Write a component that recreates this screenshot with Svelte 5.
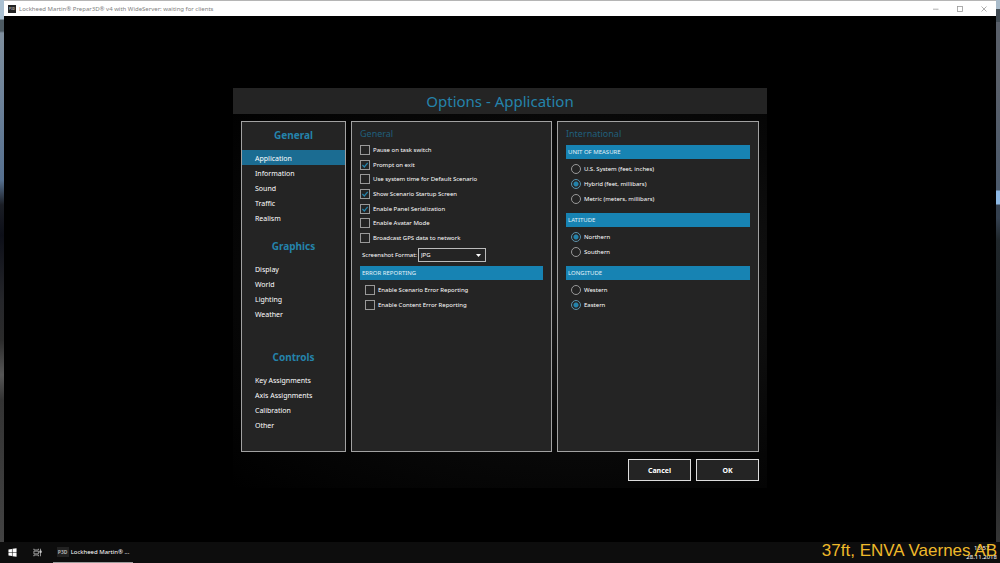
<script lang="ts">
  const groups = [
    { title: 'General', items: ['Application', 'Information', 'Sound', 'Traffic', 'Realism'] },
    { title: 'Graphics', items: ['Display', 'World', 'Lighting', 'Weather'] },
    { title: 'Controls', items: ['Key Assignments', 'Axis Assignments', 'Calibration', 'Other'] },
  ];
  let current = $state('Application');

  let general = $state([
    { label: 'Pause on task switch', on: false },
    { label: 'Prompt on exit', on: true },
    { label: 'Use system time for Default Scenario', on: false },
    { label: 'Show Scenario Startup Screen', on: true },
    { label: 'Enable Panel Serialization', on: true },
    { label: 'Enable Avatar Mode', on: false },
    { label: 'Broadcast GPS data to network', on: false },
  ]);
  let reporting = $state([
    { label: 'Enable Scenario Error Reporting', on: false },
    { label: 'Enable Content Error Reporting', on: false },
  ]);
  let regions = $state([
    {
      name: 'UNIT OF MEASURE',
      options: ['U.S. System (feet, inches)', 'Hybrid (feet, millibars)', 'Metric (meters, millibars)'],
      value: 'Hybrid (feet, millibars)',
    },
    { name: 'LATITUDE', options: ['Northern', 'Southern'], value: 'Northern' },
    { name: 'LONGITUDE', options: ['Western', 'Eastern'], value: 'Eastern' },
  ]);
  let format = $state('JPG');
</script>

<div class="desktop">
  <div class="window">
    <header class="titlebar">
      <span class="appicon">P3D</span>
      <span class="caption">Lockheed Martin® Prepar3D® v4 with WideServer: waiting for clients</span>
      <button class="winbtn" aria-label="Minimize">
        <svg viewBox="0 0 8 8"><path d="M1 4.2h5.5" /></svg>
      </button>
      <button class="winbtn" aria-label="Maximize">
        <svg viewBox="0 0 8 8"><rect x="1.5" y="1.5" width="5" height="5" /></svg>
      </button>
      <button class="winbtn" aria-label="Close">
        <svg viewBox="0 0 8 8"><path d="M1.5 1.5l5 5M6.5 1.5l-5 5" /></svg>
      </button>
    </header>

    <main>
      <section class="dialog">
        <h1>Options - Application</h1>
        <div class="panels">
          <nav class="panel">
            {#each groups as group}
              <div class="group">
                <h2>{group.title}</h2>
                {#each group.items as item}
                  <button class="item" class:active={item === current} onclick={() => (current = item)}>{item}</button>
                {/each}
              </div>
            {/each}
          </nav>

          <section class="panel body">
            <h3>General</h3>
            <div class="options seven">
              {#each general as option}
                <label><input type="checkbox" bind:checked={option.on} />{option.label}</label>
              {/each}
            </div>
            <div class="format">
              <label for="format">Screenshot Format:</label>
              <select id="format" bind:value={format}>
                <option>JPG</option>
                <option>PNG</option>
                <option>BMP</option>
              </select>
            </div>
            <h4>ERROR REPORTING</h4>
            <div class="options nested two">
              {#each reporting as option}
                <label><input type="checkbox" bind:checked={option.on} />{option.label}</label>
              {/each}
            </div>
          </section>

          <section class="panel body">
            <h3>International</h3>
            {#each regions as region}
              <h4>{region.name}</h4>
              <div class="options nested" class:three={region.options.length === 3} class:two={region.options.length === 2}>
                {#each region.options as option}
                  <label><input type="radio" name={region.name} value={option} bind:group={region.value} />{option}</label>
                {/each}
              </div>
            {/each}
          </section>
        </div>
        <div class="actions">
          <button>Cancel</button>
          <button>OK</button>
        </div>
      </section>
    </main>
  </div>

  <footer class="taskbar">
    <button class="start" aria-label="Start">
      <svg viewBox="0 0 10 10"><path d="M0.5 1.6L4.4 1v3.7H0.5zM5 0.9L9.5 0.3v4.4H5zM0.5 5.3h3.9V9L0.5 8.4zM5 5.3h4.5v4.4L5 9.1z" /></svg>
    </button>
    <button class="view" aria-label="Task view">
      <svg viewBox="0 0 10 10"><path d="M1 0.8v1.4h5V0.8M1 9.2V7.8h5v1.4M1 3.5h5v3H1zM8.3 0.8v8.4" /><path d="M7.6 3.2h1.6v1.8H7.6z" class="solid" /></svg>
    </button>
    <button class="task"><span class="appicon">P3D</span>Lockheed Martin® ...</button>
    <div class="clock"><span>15:57</span><span>28.11.2018</span></div>
  </footer>
  <div class="overlay">37ft, ENVA Vaernes AB</div>
</div>

<style>
  :global(body) {
    margin: 0;
    background: #000;
  }
  .desktop {
    position: relative;
    box-sizing: border-box;
    min-height: 100vh;
    display: flex;
    flex-direction: column;
    font-family: 'Noto Sans', 'Open Sans', sans-serif;
    font-size: 6px;
    color: #fff;
    background:
      linear-gradient(#a9c0d2 0 19px, #4d5a62 20px 31px, #7f8f9e 33px, #6d8299 100px, #56708f 180px, #1a1d24 205px, #0d0f18 235px, #25262a 300px, #2b2b2b 340px, #565656 375px, #333 400px, #454545) left / 4px 100% no-repeat,
      linear-gradient(#a9bccb 0 9px, #414b54 9px 22px, #595f69 22px 80px, #4b596b 190px, #8db8e4 191px 204px, #34404f 205px 218px, #20272b 240px, #17191b 400px, #393939);
  }
  button {
    font: inherit;
    color: inherit;
    background: none;
    border: 0;
    padding: 0;
  }
  h1, h2, h3, h4 {
    margin: 0;
    font-weight: 400;
  }
  .window {
    flex: 1;
    display: flex;
    flex-direction: column;
    margin: 0 4px;
    background: #000;
  }
  .titlebar {
    display: flex;
    align-items: center;
    height: 16px;
    box-sizing: border-box;
    padding: 0 0 0 4px;
    border-top: 1px solid #b5b5b5;
    background: #fff;
    color: #808080;
  }
  .appicon {
    width: 8px;
    height: 8px;
    line-height: 8px;
    font-size: 3px;
    font-weight: 700;
    text-align: center;
    color: #aaa;
    background: #222;
  }
  .caption {
    flex: 1;
    margin-left: 3px;
  }
  .winbtn {
    width: 24px;
    height: 15px;
    display: grid;
    place-items: center;
  }
  .winbtn svg {
    width: 8px;
    height: 8px;
    fill: none;
    stroke: #999;
    stroke-width: 0.8;
  }
  main {
    flex: 1;
    display: flex;
    justify-content: center;
    align-items: flex-start;
    padding-top: 72px;
  }
  .dialog {
    width: 100%;
    max-width: 534px;
    background: radial-gradient(ellipse at 65% 50%, #1a1a1a, #080808 60%, #000);
  }
  h1 {
    line-height: 26px;
    text-align: center;
    font-size: 15px;
    color: #2483ab;
    background: #242424;
  }
  .panels {
    display: grid;
    grid-template-columns: 105fr 201fr 202fr;
    gap: 5px;
    margin: 7px 8px 0;
  }
  .panel {
    box-sizing: border-box;
    min-height: 331px;
    border: 1px solid #a2a2a2;
    background: #242424;
  }
  .group {
    box-sizing: border-box;
    min-height: 111px;
    padding-top: 4px;
  }
  .group:last-child {
    min-height: 104px;
  }
  h2 {
    margin-bottom: 6px;
    line-height: 18px;
    text-align: center;
    font-size: 10px;
    font-weight: 700;
    color: #2483ab;
  }
  .item {
    display: block;
    width: 100%;
    padding: 2px 0 0 13px;
    line-height: 13px;
    font-size: 7px;
    text-align: left;
  }
  .item.active {
    background: #1b6c92;
  }
  .body {
    padding: 4px 8px;
  }
  h3 {
    margin-bottom: 3px;
    line-height: 16px;
    font-size: 9px;
    color: #205f7b;
  }
  h4 {
    padding-left: 2px;
    line-height: 14px;
    color: #e2f1f8;
    background: #1783b3;
  }
  .options {
    display: grid;
    grid-auto-rows: 1fr;
  }
  .options label {
    display: flex;
    align-items: center;
    gap: 3px;
    white-space: nowrap;
  }
  .nested {
    padding: 3px 0 0 5px;
    margin-bottom: 7px;
  }
  .seven {
    height: 102px;
    margin-top: -2px;
  }
  .three {
    height: 44px;
  }
  .two {
    height: 29px;
  }
  input {
    appearance: none;
    flex: none;
    box-sizing: border-box;
    width: 10px;
    height: 10px;
    margin: 0;
    border: 1px solid #999;
    background: #242424 center / 8px 8px no-repeat;
  }
  input[type='radio'] {
    border-radius: 50%;
  }
  input[type='checkbox']:checked {
    background-image: url("data:image/svg+xml,%3Csvg xmlns='http://www.w3.org/2000/svg' viewBox='0 0 8 8'%3E%3Cpath d='M1.4 4l1.9 2L6.7 1.8' fill='none' stroke='%232483ab' stroke-width='1.2'/%3E%3C/svg%3E");
  }
  input[type='radio']:checked {
    border-color: #5b92ab;
    background-image: radial-gradient(circle, #2483ab 2px, transparent 3px);
  }
  .format {
    display: flex;
    align-items: center;
    gap: 1px;
    height: 14px;
    margin: 3px 0 4px;
    padding-left: 2px;
  }
  select {
    appearance: none;
    width: 68px;
    height: 14px;
    padding: 0 2px;
    border: 1px solid #bbb;
    border-radius: 0;
    font: inherit;
    color: inherit;
    background: #242424 url("data:image/svg+xml,%3Csvg xmlns='http://www.w3.org/2000/svg' viewBox='0 0 5 3'%3E%3Cpath d='M0 0h5L2.5 3z' fill='%23fff'/%3E%3C/svg%3E") right 4px center / 5px 3px no-repeat;
  }
  .actions {
    display: flex;
    justify-content: flex-end;
    gap: 5px;
    padding: 7px 8px 7px;
  }
  .actions button {
    box-sizing: border-box;
    width: 63px;
    height: 22px;
    border: 1px solid #ddd;
    font-size: 7px;
    font-weight: 700;
    background: #242424;
  }
  .taskbar {
    display: flex;
    height: 21px;
    background: #0d0d0d;
  }
  .taskbar button {
    display: flex;
    align-items: center;
    justify-content: center;
  }
  .taskbar svg {
    width: 9px;
    height: 9px;
    fill: #fff;
  }
  .taskbar .start,
  .taskbar .view {
    width: 25px;
  }
  .taskbar .view svg {
    fill: none;
    stroke: #ccc;
    stroke-width: 0.8;
  }
  .taskbar .view .solid {
    fill: #ccc;
  }
  .taskbar .task {
    box-sizing: border-box;
    width: 80px;
    margin-left: 3px;
    gap: 2px;
    border-bottom: 1px solid #9a9a9a;
    white-space: nowrap;
  }
  .task .appicon {
    width: 12px;
    height: 10px;
    line-height: 10px;
    font-size: 5px;
  }
  .clock {
    display: flex;
    flex-direction: column;
    align-items: center;
    margin-left: auto;
    padding: 2px 3px 0 0;
    line-height: 9px;
  }
  .overlay {
    position: absolute;
    right: 3px;
    bottom: 2px;
    line-height: 20px;
    font-family: 'Liberation Sans', sans-serif;
    font-size: 17px;
    color: #efb92a;
    white-space: nowrap;
  }
</style>
